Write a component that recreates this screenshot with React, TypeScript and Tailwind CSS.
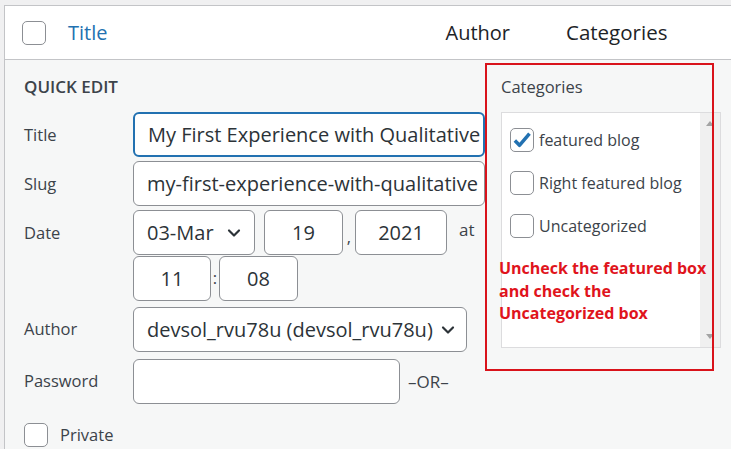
import { ChevronDown } from 'lucide-react';

const font = { fontFamily: '"Open Sans", "Noto Sans", sans-serif' };

function Box({ checked = false }: { checked?: boolean }) {
  return (
    <span className="flex h-[24px] w-[24px] shrink-0 items-center justify-center rounded-[5px] border border-[#8c8f94] bg-white">
      {checked && (
        <svg viewBox="0 0 20 20" className="h-[22px] w-[22px]">
          <path d="M3.5 10.5l4.2 4.3L16.8 4.2" fill="none" stroke="#2271b1" strokeWidth="3.2" strokeLinejoin="round" />
        </svg>
      )}
    </span>
  );
}

function Field({ w, children, center = false, focus = false }: { w: string; children?: React.ReactNode; center?: boolean; focus?: boolean }) {
  return (
    <div
      className={`flex h-[45px] shrink-0 items-center overflow-hidden whitespace-nowrap rounded-[6px] bg-white px-[13px] text-[20px] text-[#2c3338] ${w} ${center ? 'justify-center' : ''} ${focus ? 'border-2 border-[#2271b1]' : 'border border-[#8c8f94]'}`}
    >
      {children}
    </div>
  );
}

const cats = [
  { label: 'featured blog', checked: true },
  { label: 'Right featured blog', checked: false },
  { label: 'Uncategorized', checked: false },
];

export default function App() {
  return (
    <div className="relative h-[449px] w-[731px] overflow-hidden bg-[#f0f0f1] pl-[4px] pt-[5px]" style={font}>
      <div className="border-l border-t border-[#c3c4c7]">
        {/* table header */}
        <div className="flex h-[54px] items-center border-b border-[#c3c4c7] bg-white text-[20px]">
          <span className="ml-[17px]"><Box /></span>
          <span className="ml-[22px] text-[#2271b1]">Title</span>
          <span className="ml-[338px] text-[#1d2327]">Author</span>
          <span className="ml-[56px] text-[20.5px] text-[#1d2327]">Categories</span>
        </div>

        {/* quick edit */}
        <div className="flex h-[400px] bg-[#f6f7f7] pl-[19px] text-[16.5px] text-[#3c434a]">
          <div className="w-[466px]">
            <div className="mt-[15px] h-[24px] text-[17px] font-semibold leading-[24px] text-[#3c434a]">QUICK EDIT</div>

            <div className="mt-[13px] flex flex-col gap-[4px]">
              <div className="flex items-center">
                <span className="w-[109px] pt-[1px]">Title</span>
                <Field w="w-[352px]" focus>My First Experience with Qualitative</Field>
              </div>
              <div className="flex items-center">
                <span className="w-[109px] pt-[1px]">Slug</span>
                <Field w="w-[352px]">my-first-experience-with-qualitative</Field>
              </div>
              <div className="flex">
                <span className="flex h-[45px] w-[109px] items-center pt-[1px]">Date</span>
                <div className="flex flex-col gap-[1px]">
                  <div className="flex items-center">
                    <Field w="w-[122px] justify-between pr-[10px]">
                      <span>03-Mar</span>
                      <ChevronDown className="h-[20px] w-[20px] text-[#2c3338]" strokeWidth={2.6} />
                    </Field>
                    <span className="ml-[9px]"><Field w="w-[79px]" center>19</Field></span>
                    <span className="mt-[10px] w-[12px] text-center">,</span>
                    <Field w="w-[92px]" center>2021</Field>
                    <span className="ml-[12px] -mt-[6px] text-[17px]">at</span>
                  </div>
                  <div className="flex items-center">
                    <Field w="w-[78px]" center>11</Field>
                    <span className="w-[8px] text-center">:</span>
                    <Field w="w-[79px]" center>08</Field>
                  </div>
                </div>
              </div>
              <div className="mt-[2px] flex items-center">
                <span className="w-[109px]">Author</span>
                <Field w="w-[334px] justify-between pr-[8px]">
                  <span>devsol_rvu78u (devsol_rvu78u)</span>
                  <ChevronDown className="h-[20px] w-[20px] shrink-0 text-[#2c3338]" strokeWidth={2.6} />
                </Field>
              </div>
              <div className="mt-[3px] flex items-center">
                <span className="w-[109px]">Password</span>
                <Field w="w-[267px]" />
                <span className="ml-[8px] text-[17px]">–OR–</span>
              </div>
              <div className="mt-[15px] flex items-center">
                <Box />
                <span className="ml-[12px]">Private</span>
              </div>
            </div>
          </div>

          {/* categories */}
          <div className="ml-[11px]">
            <div className="mt-[15px] h-[24px] leading-[24px] text-[#3c434a]">Categories</div>
            <div className="mt-[13px] flex h-[236px] w-[220px] border border-[#dcdcde] bg-white">
              <div className="flex flex-1 flex-col gap-[18px] pl-[8px] pt-[14px] text-[16px]">
                {cats.map((c) => (
                  <div key={c.label} className="flex h-[25px] items-center">
                    <Box checked={c.checked} />
                    <span className="ml-[5px] text-[#3c434a]">{c.label}</span>
                  </div>
                ))}
              </div>
              <div className="flex w-[20px] flex-col items-center justify-between bg-[#f0f0f0] py-[8px]">
                <span className="h-0 w-0 border-x-[4px] border-b-[5px] border-x-transparent border-b-[#a3a3a3]" />
                <span className="h-0 w-0 border-x-[4px] border-t-[5px] border-x-transparent border-t-[#a3a3a3]" />
              </div>
            </div>
          </div>
        </div>
      </div>

      {/* annotation */}
      <div className="absolute left-[485px] top-[63px] h-[308px] w-[229px] border-2 border-[#d9131b]" />
      <div className="absolute left-[499px] top-[257px] text-[16px] font-bold leading-[22.5px] text-[#e0141c]">
        Uncheck the featured box
        <br />
        and check the
        <br />
        Uncategorized box
      </div>
    </div>
  );
}
